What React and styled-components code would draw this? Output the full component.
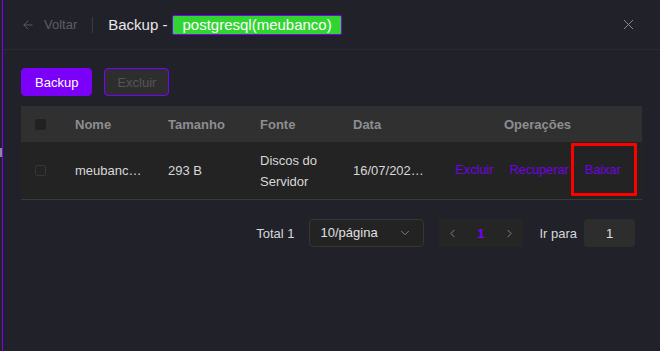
import React from 'react';
import styled, { createGlobalStyle } from 'styled-components';
import { ArrowLeft, X, ChevronDown, ChevronLeft, ChevronRight } from 'lucide-react';

const GlobalStyle = createGlobalStyle`
  html, body {
    margin: 0;
    padding: 0;
    background: #21212a;
    font-family: "Liberation Sans", Arial, sans-serif;
  }
  * { box-sizing: border-box; }
`;

const columns = '41px 93px 92px 93px 93px 1fr';

const App = () => {
  return (
    <Page>
      <GlobalStyle />
      <Handle />
      <Drawer>
        <Header>
          <BackLink>
            <ArrowLeft size={14} strokeWidth={1.6} />
            <span>Voltar</span>
          </BackLink>
          <Divider />
          <Title>Backup -</Title>
          <Tag>postgresql(meubanco)</Tag>
          <Close>
            <X size={17} strokeWidth={1.4} />
          </Close>
        </Header>

        <Body>
          <Toolbar>
            <Button $primary>Backup</Button>
            <Button>Excluir</Button>
          </Toolbar>

          <Table>
            <HeadRow>
              <Cell><Check $filled /></Cell>
              <Cell>Nome</Cell>
              <Cell>Tamanho</Cell>
              <Cell>Fonte</Cell>
              <Cell>Data</Cell>
              <Cell $center>Operações</Cell>
            </HeadRow>
            <Row>
              <Cell><Check /></Cell>
              <Cell>meubanc…</Cell>
              <Cell>293 B</Cell>
              <Cell>Discos do<br />Servidor</Cell>
              <Cell>16/07/202…</Cell>
              <Cell $center>
                <Actions>
                  <ActionLink>Excluir</ActionLink>
                  <ActionLink>Recuperar</ActionLink>
                  <ActionLink $marked>Baixar</ActionLink>
                </Actions>
              </Cell>
            </Row>
          </Table>

          <Pagination>
            <Total>Total 1</Total>
            <Select>
              <span>10/página</span>
              <ChevronDown size={14} strokeWidth={1.5} />
            </Select>
            <Pager>
              <PageItem><ChevronLeft size={13} strokeWidth={1.5} /></PageItem>
              <PageItem $active>1</PageItem>
              <PageItem><ChevronRight size={13} strokeWidth={1.5} /></PageItem>
            </Pager>
            <Jump>Ir para</Jump>
            <JumpInput>1</JumpInput>
          </Pagination>
        </Body>
      </Drawer>
    </Page>
  );
};

export default App;

const Page = styled.div`
  position: relative;
  display: flex;
  height: 100vh;
  padding-left: 2px;
  background: #21212a;
`;

const Handle = styled.div`
  position: absolute;
  left: 0;
  top: 148px;
  width: 2px;
  height: 9px;
  background: #8a8a9c;
`;

const Drawer = styled.div`
  flex: 1;
  display: flex;
  flex-direction: column;
  border-left: 1px solid #7b00ff;
`;

const Header = styled.div`
  display: flex;
  align-items: center;
  height: 50px;
  padding: 0 23px 0 18px;
  border-bottom: 1px solid #2a2b2e;
`;

const BackLink = styled.div`
  display: flex;
  align-items: center;
  gap: 9px;
  color: #5d5d66;
  font-size: 13px;
  padding-top: 1px;

  span {
    margin-top: -2px;
  }
`;

const Divider = styled.div`
  width: 1px;
  height: 16px;
  background: #3a3a42;
  margin: 0 15px 0 15px;
`;

const Title = styled.span`
  color: #e8e8e8;
  font-size: 15px;
  margin-right: 5px;
`;

const Tag = styled.span`
  display: inline-flex;
  align-items: center;
  height: 20px;
  padding: 0 9px;
  background: #31d431;
  border: 1px solid #7b00ff;
  border-radius: 2px;
  color: #fff;
  font-size: 15px;
`;

const Close = styled.div`
  margin-left: auto;
  display: flex;
  color: #8a8a92;
`;

const Body = styled.div`
  padding: 18px 18px 0;
`;

const Toolbar = styled.div`
  display: flex;
  gap: 12px;
  margin-bottom: 10px;
`;

const Button = styled.button`
  height: 28px;
  padding: 0 ${p => (p.$primary ? '13px' : '12px')};
  border-radius: 4px;
  font-family: inherit;
  font-size: 13px;
  border: 1px solid #7b00ff;
  background: ${p => (p.$primary ? '#7b00f7' : '#2e2e2e')};
  color: ${p => (p.$primary ? '#ffffff' : '#555558')};
`;

const Table = styled.div`
  width: 621px;
`;

const HeadRow = styled.div`
  display: grid;
  grid-template-columns: ${columns};
  align-items: center;
  height: 36px;
  background: #303030;
  color: #8d8d92;
  font-weight: bold;
  font-size: 13px;
`;

const Row = styled.div`
  display: grid;
  grid-template-columns: ${columns};
  align-items: center;
  height: 58px;
  background: #232323;
  border-bottom: 1px solid #3a3a3a;
  color: #d8d8d8;
  font-size: 13px;
  line-height: 21px;
`;

const Cell = styled.div`
  padding: 0 13px;
  text-align: ${p => (p.$center ? 'center' : 'left')};
  white-space: nowrap;
  display: flex;
  align-items: center;
  justify-content: ${p => (p.$center ? 'center' : 'flex-start')};

  &:first-child {
    padding-left: 14px;
  }
`;

const Check = styled.span`
  display: block;
  width: 11px;
  height: 11px;
  border-radius: 2px;
  background: ${p => (p.$filled ? '#212121' : 'transparent')};
  border: 1px solid ${p => (p.$filled ? '#212121' : '#3a3434')};
`;

const Actions = styled.div`
  display: flex;
  gap: 16px;
  margin-left: 1px;
`;

const ActionLink = styled.span`
  position: relative;
  color: #7400e8;
  font-size: 12.7px;

  ${p =>
    p.$marked &&
    `
    &::after {
      content: '';
      position: absolute;
      left: -14px;
      right: -16px;
      top: -17px;
      bottom: -15px;
      border: 3px solid #ff0000;
      border-radius: 1px;
    }
  `}
`;

const Pagination = styled.div`
  display: flex;
  align-items: center;
  justify-content: flex-end;
  height: 28px;
  margin-top: 19px;
  padding-right: 7px;
  font-size: 13px;
  color: #d8d8d8;
`;

const Total = styled.span`
  margin-right: 14px;
`;

const Select = styled.div`
  display: flex;
  align-items: center;
  justify-content: space-between;
  width: 115px;
  height: 28px;
  padding: 0 11px;
  margin-right: 15px;
  background: #232323;
  border: 1px solid #3a3434;
  border-radius: 4px;
  color: #e0e0e0;

  span {
    margin-top: -2px;
  }

  svg {
    color: #8a8a8a;
  }
`;

const Pager = styled.div`
  display: flex;
  height: 28px;
  background: #252525;
  margin-right: 16px;
`;

const PageItem = styled.div`
  width: 28.3px;
  display: flex;
  align-items: center;
  justify-content: center;
  color: ${p => (p.$active ? '#7b00ff' : '#9a9a9a')};
  font-weight: ${p => (p.$active ? 'bold' : 'normal')};
`;

const Jump = styled.span`
  margin-right: 7px;
`;

const JumpInput = styled.div`
  width: 51px;
  height: 28px;
  display: flex;
  align-items: center;
  justify-content: center;
  background: #2d2d2d;
  border-radius: 4px;
  color: #e0e0e0;
`;
